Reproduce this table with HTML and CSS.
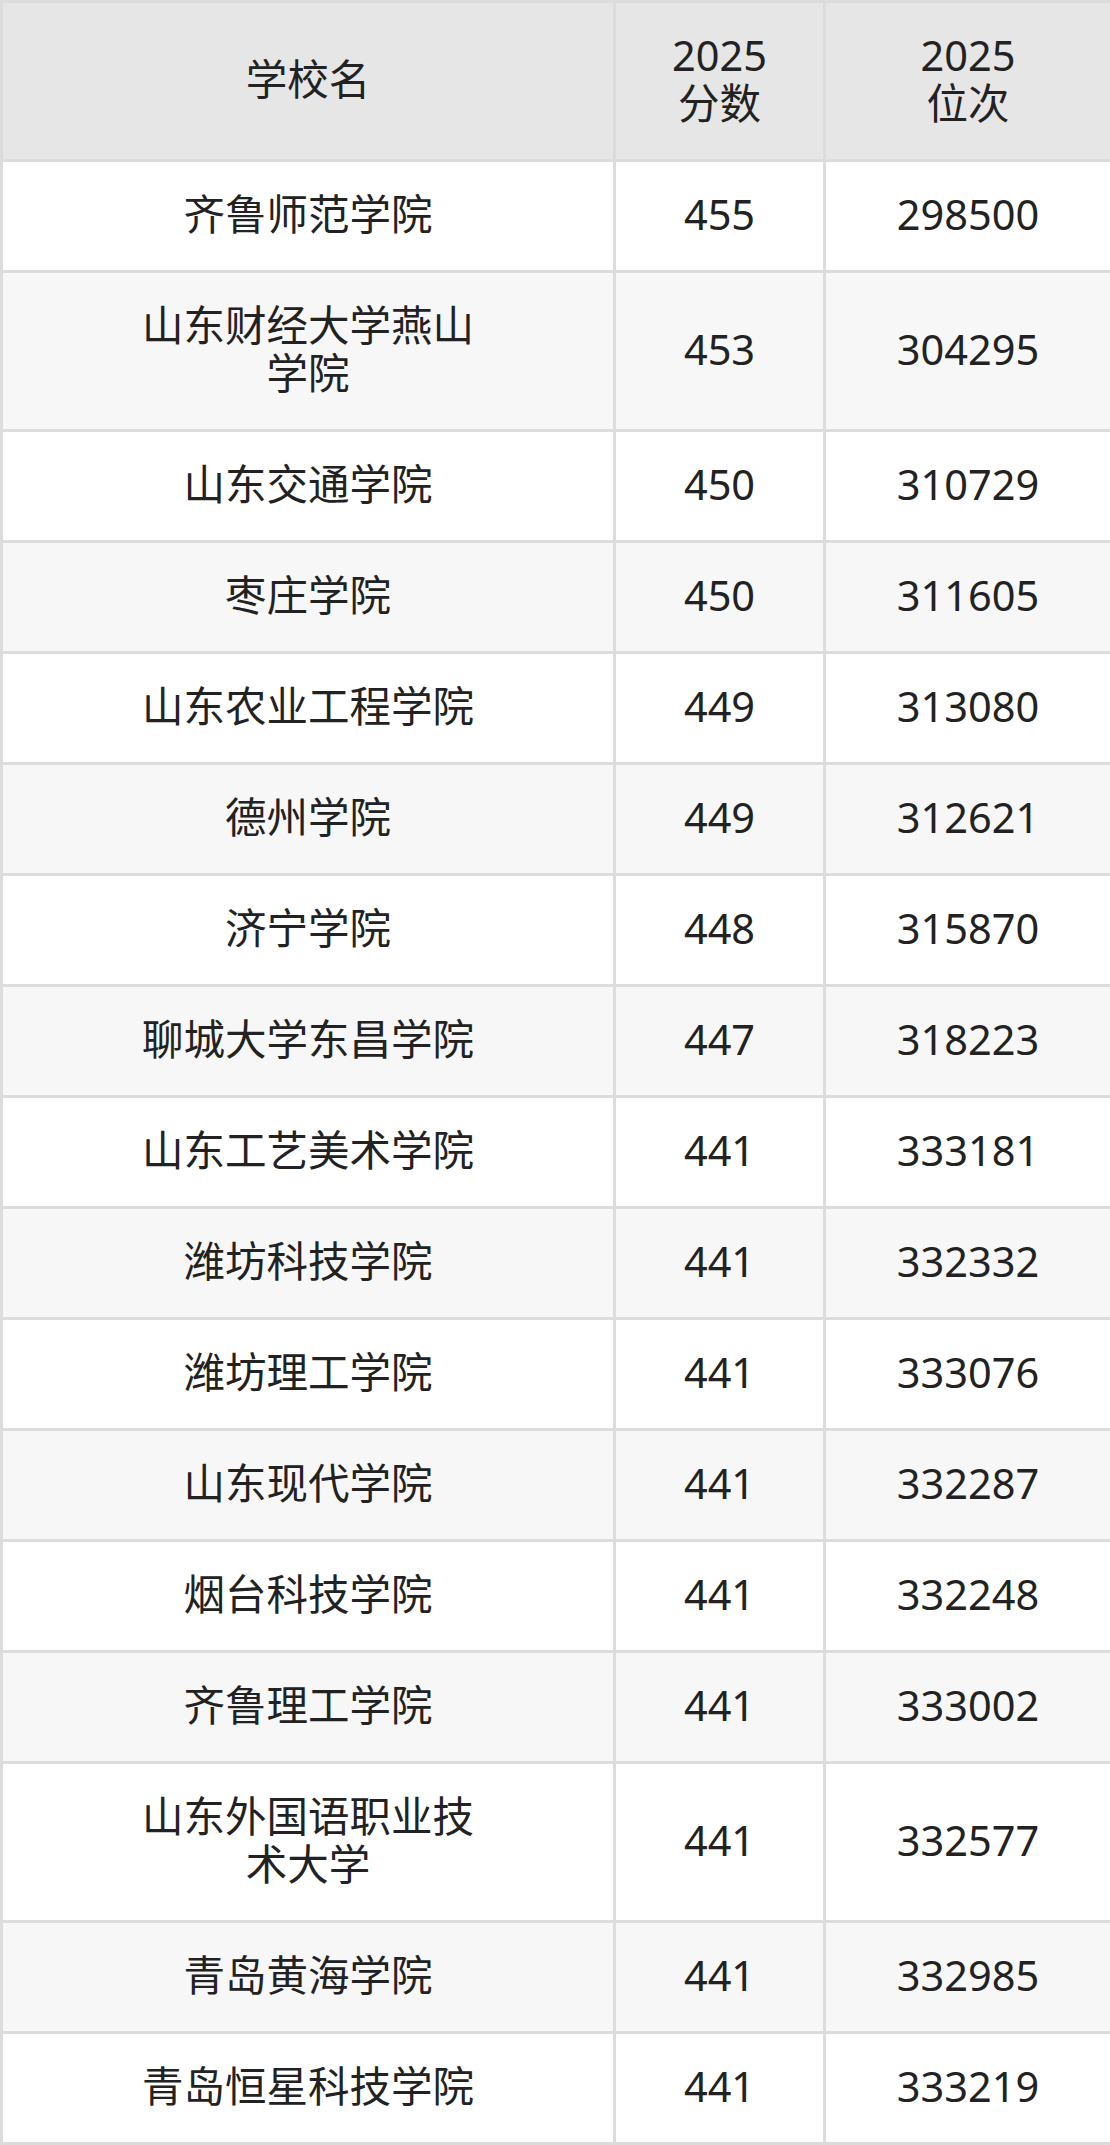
FILE: index.html
```html
<!DOCTYPE html>
<html lang="zh">
<head>
<meta charset="utf-8">
<title>2025 分数位次</title>
<link rel="stylesheet" href="styles.css">
</head>
<body>
<table class="score-table">
  <colgroup>
    <col class="col-name">
    <col class="col-score">
    <col class="col-rank">
  </colgroup>
  <thead>
    <tr>
      <th class="cell-name">学校名</th>
      <th>2025<br>分数</th>
      <th>2025<br>位次</th>
    </tr>
  </thead>
  <tbody>
    <tr><td class="cell-name">齐鲁师范学院</td><td>455</td><td>298500</td></tr>
    <tr><td class="cell-name">山东财经大学燕山学院</td><td>453</td><td>304295</td></tr>
    <tr><td class="cell-name">山东交通学院</td><td>450</td><td>310729</td></tr>
    <tr><td class="cell-name">枣庄学院</td><td>450</td><td>311605</td></tr>
    <tr><td class="cell-name">山东农业工程学院</td><td>449</td><td>313080</td></tr>
    <tr><td class="cell-name">德州学院</td><td>449</td><td>312621</td></tr>
    <tr><td class="cell-name">济宁学院</td><td>448</td><td>315870</td></tr>
    <tr><td class="cell-name">聊城大学东昌学院</td><td>447</td><td>318223</td></tr>
    <tr><td class="cell-name">山东工艺美术学院</td><td>441</td><td>333181</td></tr>
    <tr><td class="cell-name">潍坊科技学院</td><td>441</td><td>332332</td></tr>
    <tr><td class="cell-name">潍坊理工学院</td><td>441</td><td>333076</td></tr>
    <tr><td class="cell-name">山东现代学院</td><td>441</td><td>332287</td></tr>
    <tr><td class="cell-name">烟台科技学院</td><td>441</td><td>332248</td></tr>
    <tr><td class="cell-name">齐鲁理工学院</td><td>441</td><td>333002</td></tr>
    <tr><td class="cell-name">山东外国语职业技术大学</td><td>441</td><td>332577</td></tr>
    <tr><td class="cell-name">青岛黄海学院</td><td>441</td><td>332985</td></tr>
    <tr><td class="cell-name">青岛恒星科技学院</td><td>441</td><td>333219</td></tr>
  </tbody>
</table>
</body>
</html>
```

FILE: styles.css
```css
html, body {
  margin: 0;
  padding: 0;
  background: #ffffff;
}

.score-table {
  width: 1110px;
  table-layout: fixed;
  border-collapse: collapse;
  font-family: "Noto Sans", "Noto Sans CJK SC", sans-serif;
  font-size: 41.5px;
  line-height: 48px;
  color: #222222;
}

.col-name { width: 613px; }
.col-score { width: 210px; }
.col-rank { width: 287px; }

.score-table th,
.score-table td {
  border: 3px solid #dcdcdc;
  text-align: center;
  vertical-align: middle;
  padding: 28px 0 32px;
  font-weight: 400;
}

.score-table th {
  background: #e6e6e6;
}

.score-table .cell-name {
  padding-left: 128px;
  padding-right: 128px;
}

.score-table tbody tr:nth-child(even) td {
  background: #f7f7f7;
}
```
